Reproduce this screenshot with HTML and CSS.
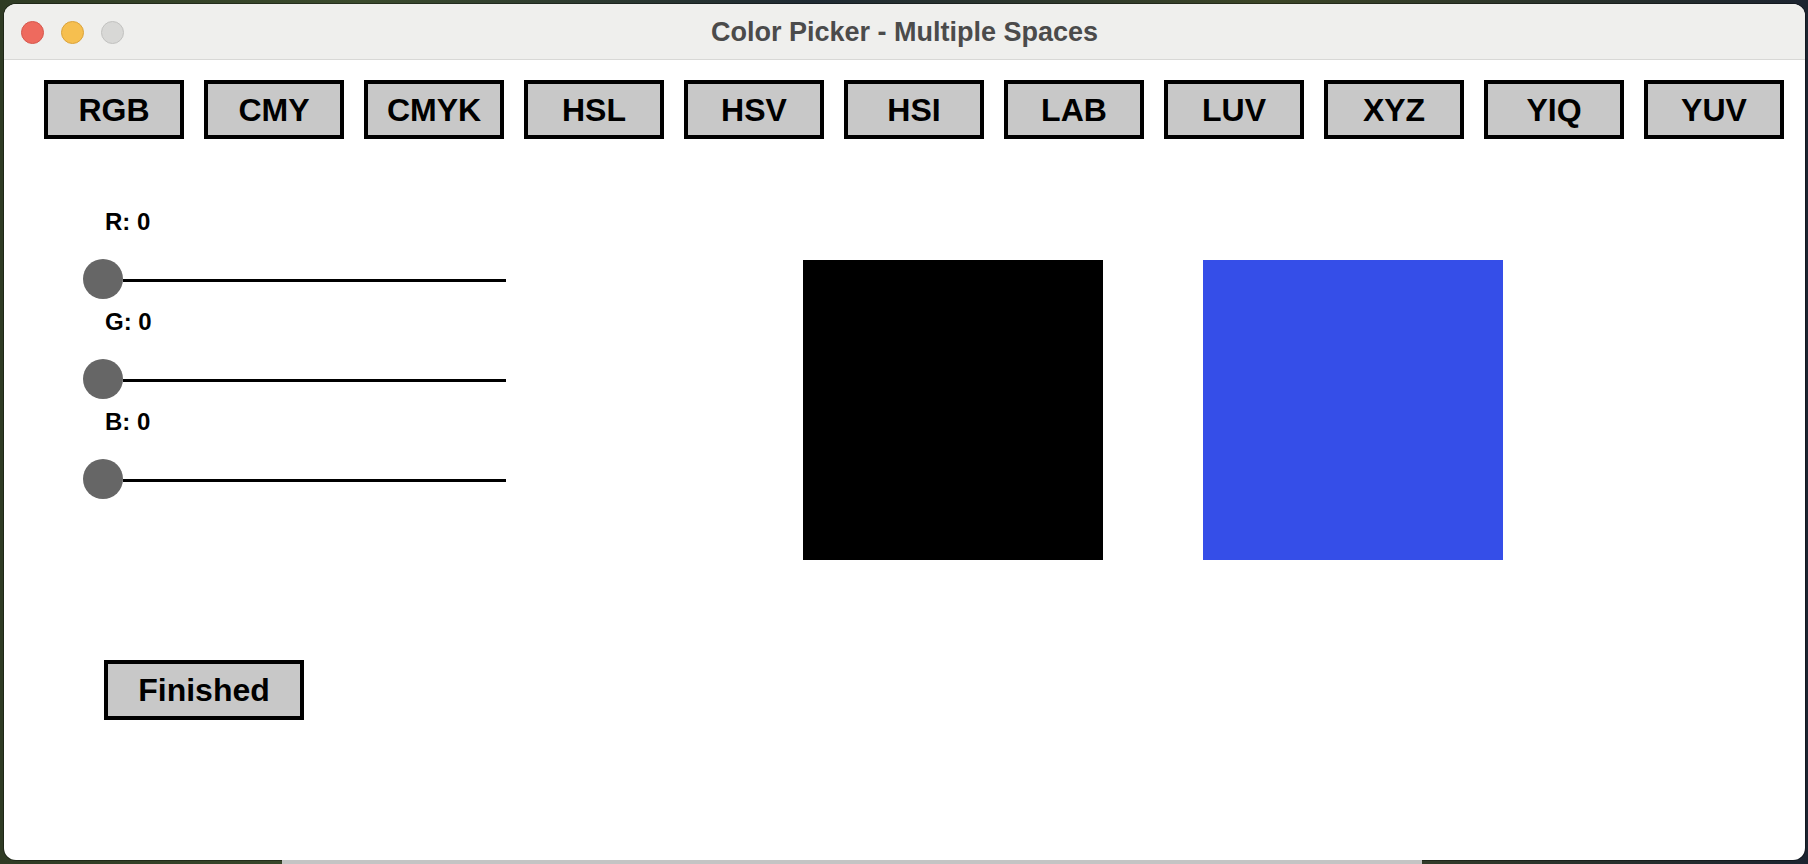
FILE: index.html
```html
<!DOCTYPE html>
<html lang="en">
<head>
<meta charset="utf-8">
<title>Color Picker - Multiple Spaces</title>
<link rel="stylesheet" href="styles.css">
</head>
<body>
<div class="desktop">
  <div class="window">
    <div class="titlebar">
      <div class="lights">
        <span class="light red"></span>
        <span class="light yellow"></span>
        <span class="light gray"></span>
      </div>
      <div class="title">Color Picker - Multiple Spaces</div>
      <div class="spacer"></div>
    </div>
    <div class="toolbar">
      <button class="btn space">RGB</button>
      <button class="btn space">CMY</button>
      <button class="btn space">CMYK</button>
      <button class="btn space">HSL</button>
      <button class="btn space">HSV</button>
      <button class="btn space">HSI</button>
      <button class="btn space">LAB</button>
      <button class="btn space">LUV</button>
      <button class="btn space">XYZ</button>
      <button class="btn space">YIQ</button>
      <button class="btn space">YUV</button>
    </div>
    <div class="content">
      <div class="controls">
        <div class="sliders">
          <div class="slider-group">
            <div class="label">R: 0</div>
            <div class="track"><span class="knob"></span><span class="line"></span></div>
          </div>
          <div class="slider-group">
            <div class="label">G: 0</div>
            <div class="track"><span class="knob"></span><span class="line"></span></div>
          </div>
          <div class="slider-group">
            <div class="label">B: 0</div>
            <div class="track"><span class="knob"></span><span class="line"></span></div>
          </div>
        </div>
        <button class="btn finish">Finished</button>
      </div>
      <div class="swatches">
        <div class="swatch black"></div>
        <div class="swatch blue"></div>
      </div>
    </div>
  </div>
  <div class="dock-strip"></div>
</div>
</body>
</html>
```

FILE: styles.css
```css
html, body {
  margin: 0;
  padding: 0;
}

body {
  width: 1808px;
  height: 864px;
  overflow: hidden;
  background: linear-gradient(90deg, #2f3b24 0%, #3a4a2c 20%, #1f2a33 45%, #3b4526 70%, #1c2430 100%);
  font-family: "Liberation Sans", Arial, sans-serif;
}

.desktop {
  display: flex;
  flex-direction: column;
  padding: 4px 0 0 4px;
}

.window {
  width: 1801px;
  height: 856px;
  background: #ffffff;
  border-radius: 12px;
  overflow: hidden;
  display: flex;
  flex-direction: column;
  box-shadow: 0 0 0 1px rgba(0, 0, 0, 0.35);
}

.titlebar {
  height: 55px;
  flex: none;
  background: #efefed;
  border-bottom: 1px solid #d8d8d6;
  display: grid;
  grid-template-columns: 1fr auto 1fr;
  align-items: center;
}

.lights {
  display: flex;
  gap: 17px;
  padding-left: 17px;
  padding-top: 1px;
}

.light {
  width: 23px;
  height: 23px;
  border-radius: 50%;
  box-sizing: border-box;
}

.light.red {
  background: #ee6a5e;
  border: 1px solid #d6574c;
}

.light.yellow {
  background: #f6bf4f;
  border: 1px solid #dba33a;
}

.light.gray {
  background: #d8d8d6;
  border: 1px solid #c2c2c0;
}

.title {
  font-family: "Liberation Sans", Arial, sans-serif;
  font-weight: 700;
  font-size: 27px;
  color: #4b4b4b;
  padding-top: 2px;
}

.toolbar {
  flex: none;
  display: flex;
  gap: 20px;
  padding: 20px 0 0 40px;
}

.btn {
  box-sizing: border-box;
  margin: 0;
  padding: 0;
  background: #c8c8c8;
  border: 4px solid #000000;
  border-radius: 0;
  font-family: "Liberation Sans", Arial, sans-serif;
  font-weight: 700;
  font-size: 32px;
  line-height: 1;
  color: #000000;
  display: flex;
  align-items: center;
  justify-content: center;
}

.btn.space {
  width: 140px;
  height: 59px;
}

.content {
  display: flex;
  padding: 61px 0 0 79px;
}

.controls {
  width: 423px;
  display: flex;
  flex-direction: column;
}

.slider-group {
  height: 100px;
}

.label {
  padding: 8px 0 0 22px;
  font-weight: 700;
  font-size: 24px;
  line-height: 28px;
  color: #000000;
}

.track {
  display: flex;
  margin-top: 23px;
  height: 40px;
}

.knob {
  width: 40px;
  height: 40px;
  border-radius: 50%;
  background: #666666;
  flex: none;
}

.line {
  flex: 1;
  height: 3px;
  margin-top: 20px;
  background: #000000;
}

.btn.finish {
  width: 200px;
  height: 60px;
  margin: 160px 0 0 21px;
}

.swatches {
  display: flex;
  gap: 100px;
  margin: 60px 0 0 297px;
}

.swatch {
  width: 300px;
  height: 300px;
}

.swatch.black {
  background: #000000;
}

.swatch.blue {
  background: #354ee8;
}

.dock-strip {
  height: 4px;
  width: 1140px;
  margin-left: 278px;
  background: #c4c4c4;
}
```
